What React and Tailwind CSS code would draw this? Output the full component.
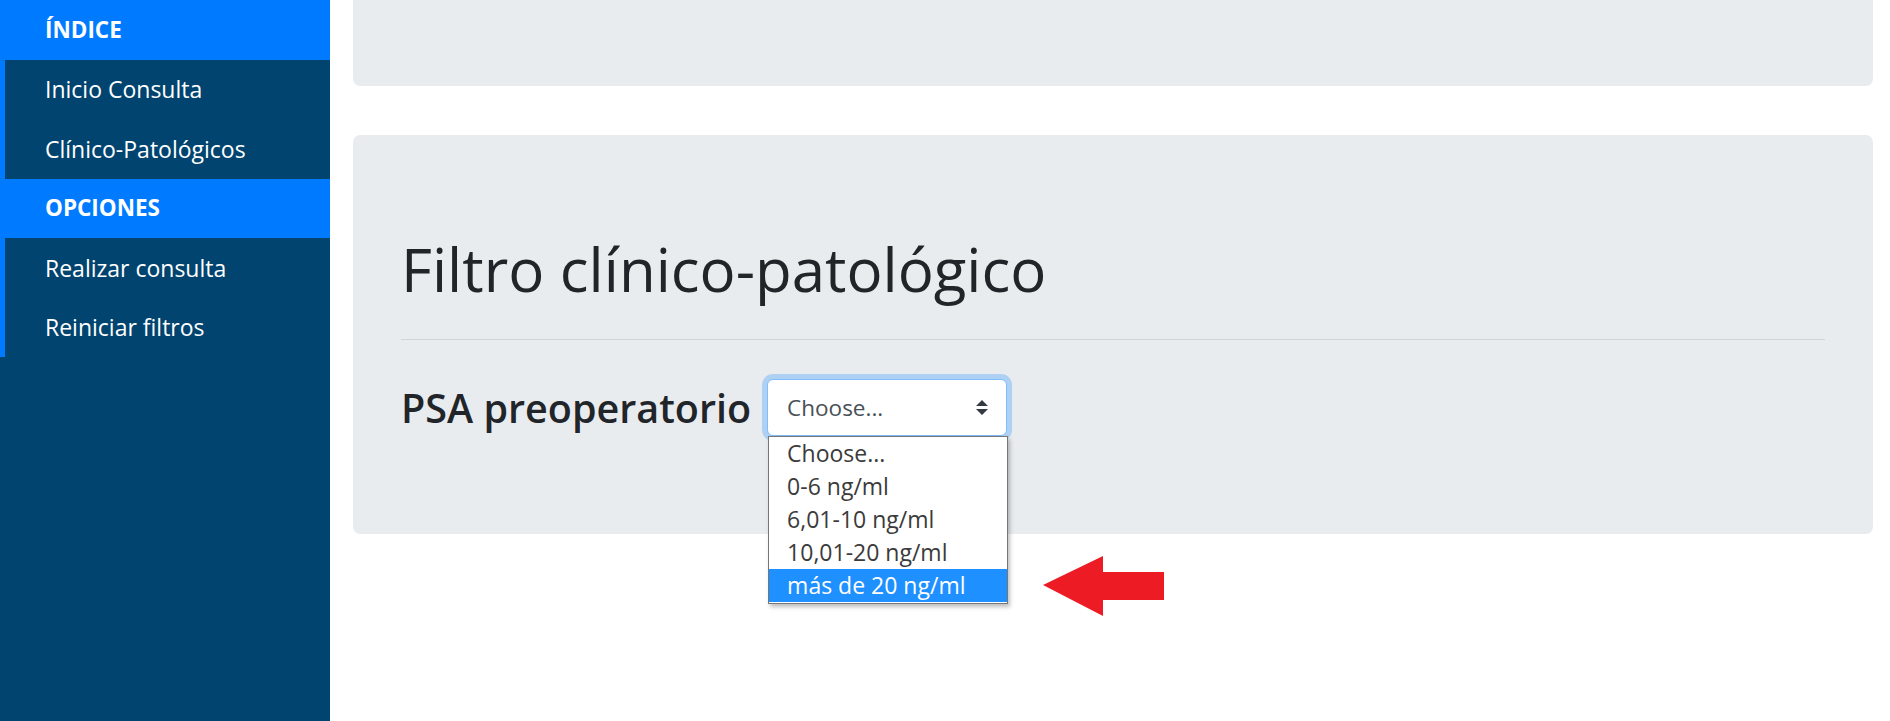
import React from "react";

const sidebar = [
  { title: "ÍNDICE", items: ["Inicio Consulta", "Clínico-Patológicos"] },
  { title: "OPCIONES", items: ["Realizar consulta", "Reiniciar filtros"] },
];

const options = ["Choose...", "0-6 ng/ml", "6,01-10 ng/ml", "10,01-20 ng/ml", "más de 20 ng/ml"];

export default function App() {
  return (
    <div className="flex h-[721px] overflow-hidden bg-white font-['Open_Sans','Noto_Sans',sans-serif] text-[#212529]">
      <aside className="w-[330px] shrink-0 bg-[#00446f]">
        <div className="bg-[#007bff]">
          {sidebar.map((group) => (
            <div key={group.title}>
              <div className="flex h-[59.5px] items-center pl-[45px] text-[22.5px] font-bold text-white">
                {group.title}
              </div>
              <ul className="ml-[5px] bg-[#00446f]">
                {group.items.map((item) => (
                  <li key={item} className="flex h-[59.5px] items-center pl-[40px] text-[23px] text-white">
                    {item}
                  </li>
                ))}
              </ul>
            </div>
          ))}
        </div>
      </aside>

      <main className="flex-1 pl-[23px] pr-[17px]">
        <div className="h-[86px] rounded-b-[7px] bg-[#e9ecef]" />

        <div className="mt-[49px] h-[399px] rounded-[7px] bg-[#e9ecef] px-[48px] pt-[98px]">
          <h1 className="text-[60px] font-medium leading-[72px]">Filtro clínico-patológico</h1>
          <hr className="mt-[34px] border-0 border-t border-black/10" />

          <div className="mt-[39px] flex items-center">
            <h3 className="text-[39.5px] font-semibold leading-[50px]">PSA preoperatorio</h3>

            <div className="relative ml-[16px] h-[57px] w-[240px] rounded-[6px] border border-[#80bdff] bg-white shadow-[0_0_0_5px_rgba(0,123,255,0.25)]">
              <div className="flex h-full items-center justify-between pl-[19px] pr-[18px] text-[22.5px] text-[#495057]">
                <span>Choose...</span>
                <svg width="12" height="15" viewBox="0 0 4 5">
                  <path d="M2 0L0 2h4zm0 5L0 3h4z" fill="#343a40" />
                </svg>
              </div>

              <ul className="absolute left-0 top-[56px] w-[240px] border border-[#767676] bg-white pb-px shadow-[2px_3px_4px_rgba(0,0,0,0.25)]">
                {options.map((opt, i) => (
                  <li
                    key={opt}
                    className={
                      i === options.length - 1
                        ? "flex h-[33px] items-center bg-[#1e90ff] pl-[18px] text-[23px] text-white"
                        : "flex h-[33px] items-center pl-[18px] text-[23px] text-[#3b3b3b]"
                    }
                  >
                    {opt}
                  </li>
                ))}
              </ul>

              <svg className="absolute left-[275px] top-[176px]" width="121" height="60" viewBox="0 0 121 60">
                <polygon points="0,29 60,0 60,16 121,16 121,44 60,44 60,60" fill="#ed1c24" />
              </svg>
            </div>
          </div>
        </div>
      </main>
    </div>
  );
}
